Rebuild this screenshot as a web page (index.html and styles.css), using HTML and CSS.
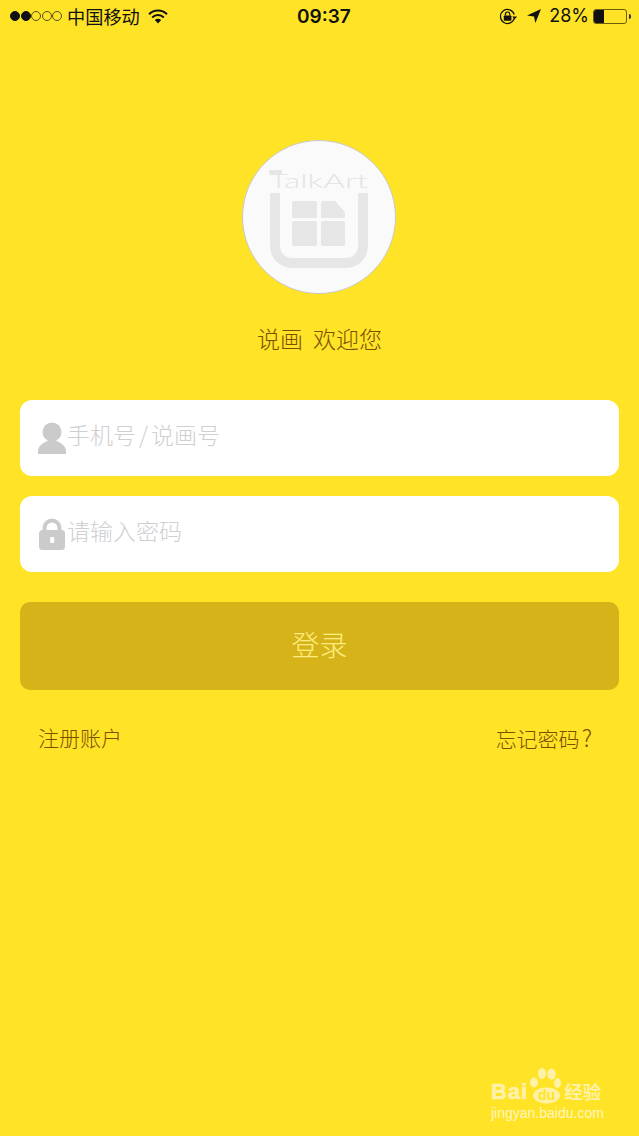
FILE: index.html
```html
<!DOCTYPE html>
<html lang="zh-CN">
<head>
    <meta charset="UTF-8">
    <meta name="viewport" content="width=device-width, initial-scale=1.0">
    <title>说画 登录</title>
    <link rel="stylesheet" href="styles.css">
</head>
<body>
    <div class="page">
        <div class="status-bar">
            <div class="status-left">
                <div class="signal">
                    <span class="dot on"></span>
                    <span class="dot on"></span>
                    <span class="dot"></span>
                    <span class="dot"></span>
                    <span class="dot"></span>
                </div>
                <span class="carrier">中国移动</span>
                <svg class="wifi" width="20" height="15" viewBox="0 0 20 15">
                    <path d="M1 5.2 A13 13 0 0 1 19 5.2" fill="none" stroke="#111" stroke-width="2"/>
                    <path d="M4.2 8.4 A8.5 8.5 0 0 1 15.8 8.4" fill="none" stroke="#111" stroke-width="2"/>
                    <path d="M10 14.5 L6.8 11 A5 5 0 0 1 13.2 11 Z" fill="#111"/>
                </svg>
            </div>
            <div class="status-time">09:37</div>
            <div class="status-right">
                <svg class="rotate-lock" width="19" height="17" viewBox="0 0 19 17">
                    <path d="M16.2 10.4 A7 7 0 1 1 16.2 6.6" fill="none" stroke="#111" stroke-width="1.2"/>
                    <path d="M14.2 8.4 L19 8.4 L16.6 11.4 Z" fill="#111"/>
                    <rect x="5.8" y="7.4" width="7.6" height="5.4" rx="0.8" fill="#111"/>
                    <path d="M7.4 7.6 V6.2 A2.2 2.2 0 0 1 11.8 6.2 V7.6" fill="none" stroke="#111" stroke-width="1.2"/>
                </svg>
                <svg class="arrow" width="14" height="14" viewBox="0 0 14 14">
                    <path d="M14 0 L0 6.6 L7 7.4 L8.4 14 Z" fill="#111"/>
                </svg>
                <span class="percent">28%</span>
                <div class="battery"><div class="battery-box"><div class="battery-fill"></div></div><div class="battery-tip"></div></div>
            </div>
        </div>

        <div class="logo">
            <svg width="152" height="152" viewBox="1 1 152 152">
                <rect x="27" y="30" width="13" height="4" rx="1" fill="#e6e6e6"/>
                <text class="logo-name" x="27" y="48" textLength="99" lengthAdjust="spacingAndGlyphs">TalkArt</text>
                <path d="M33 53 V106 A17 17 0 0 0 50 123 H104 A17 17 0 0 0 121 106 V53" fill="none" stroke="#e6e6e6" stroke-width="10"/>
                <path d="M52 61 H73 A2 2 0 0 1 75 63 V78 H52 A2 2 0 0 1 50 76 V63 A2 2 0 0 1 52 61 Z" fill="#e6e6e6"/>
                <path d="M81 61 H93 L103 72 V76 A2 2 0 0 1 101 78 H79 V63 A2 2 0 0 1 81 61 Z" fill="#e6e6e6"/>
                <rect x="50" y="81" width="25" height="25" rx="2" fill="#e6e6e6"/>
                <rect x="79" y="81" width="24" height="25" rx="2" fill="#e6e6e6"/>
            </svg>
        </div>
        <div class="welcome">说画&nbsp;&nbsp;欢迎您</div>

        <div class="form">
            <div class="field">
                <svg class="field-icon" width="30" height="34" viewBox="0 0 30 34">
                    <circle cx="15" cy="10" r="9.5" fill="#cbcbcb"/>
                    <path d="M1 32 V29 C1 24 6 21 11 18.5 H19 C24 21 29 24 29 29 V32 Z" fill="#cbcbcb"/>
                </svg>
                <span class="placeholder">手机号<span class="slash">/</span>说画号</span>
            </div>
            <div class="field">
                <svg class="field-icon" width="30" height="34" viewBox="0 0 30 34">
                    <path d="M7.5 15 V10 A7.5 7.5 0 0 1 22.5 10 V15" fill="none" stroke="#cbcbcb" stroke-width="4"/>
                    <rect x="2" y="12" width="26" height="20" rx="3.5" fill="#cbcbcb"/>
                    <rect x="13.2" y="19" width="4" height="6" rx="1" fill="#fff"/>
                </svg>
                <span class="placeholder">请输入密码</span>
            </div>
            <div class="login-btn">登录</div>
        </div>

        <div class="links">
            <span>注册账户</span>
            <span>忘记密码<span class="question">?</span></span>
        </div>

        <div class="watermark">
            <div class="wm-top">
                <span class="wm-bai">Bai</span>
                <svg class="wm-paw" width="36" height="37" viewBox="0 0 36 37">
                    <ellipse cx="9" cy="14.5" rx="4" ry="5" fill="#fff2a6"/>
                    <ellipse cx="17" cy="5.5" rx="4" ry="5.5" fill="#fff2a6"/>
                    <ellipse cx="26.5" cy="6" rx="4.3" ry="5.5" fill="#fff2a6"/>
                    <ellipse cx="32.5" cy="15" rx="3.5" ry="5" fill="#fff2a6"/>
                    <ellipse cx="21.5" cy="27.5" rx="13.5" ry="8" fill="#fff2a6"/>
                    <text class="wm-du" x="21.5" y="32" text-anchor="middle">du</text>
                </svg>
                <span class="wm-jy">经验</span>
            </div>
            <div class="wm-url">jingyan.baidu.com</div>
        </div>
    </div>
</body>
</html>
```

FILE: styles.css
```css
* {
    box-sizing: border-box;
}

body {
    margin: 0;
    font-family: "Noto Sans CJK SC", "Noto Sans", sans-serif;
    background-color: #ffe327;
}

.page {
    position: relative;
    height: 1136px;
    overflow: hidden;
    background-color: #ffe327;
}

.status-bar {
    display: flex;
    justify-content: space-between;
    align-items: center;
    height: 32px;
    padding: 0 8px 0 10px;
    position: relative;
    color: #111;
}

.status-left, .status-right, .signal {
    display: flex;
    align-items: center;
}

.signal {
    gap: 0.5px;
}

.dot {
    width: 10px;
    height: 10px;
    border: 1px solid #57500f;
    border-radius: 50%;
}

.dot.on {
    background-color: #111;
    border-color: #111;
}

.carrier {
    margin-left: 5px;
    font-size: 18.2px;
    line-height: 32px;
}

.wifi {
    margin-left: 8px;
}

.status-time {
    position: absolute;
    left: 297px;
    font-family: "Inter", "Noto Sans", sans-serif;
    font-size: 19px;
    font-weight: 600;
    line-height: 33px;
}

.arrow {
    margin-left: 10px;
}

.percent {
    margin-left: 8px;
    font-family: "Inter", "Noto Sans", sans-serif;
    font-size: 18px;
    line-height: 32px;
}

.battery {
    display: flex;
    align-items: center;
    margin-left: 4px;
}

.battery-box {
    width: 34px;
    height: 15px;
    border: 1px solid #6b5d10;
    border-radius: 3px;
    overflow: hidden;
}

.battery-fill {
    width: 10px;
    height: 100%;
    background-color: #111;
}

.battery-tip {
    width: 2px;
    height: 5px;
    margin-left: 2px;
    background-color: #333;
    border-radius: 0 2px 2px 0;
}

.logo {
    width: 154px;
    height: 154px;
    margin: 108px 0 0 242px;
    border: 1px solid #c9c9c9;
    border-radius: 50%;
    background-color: #fafafa;
}

.logo svg {
    display: block;
}

.logo-name {
    font-family: "Lato", "Noto Sans", sans-serif;
    font-size: 20px;
    font-weight: 300;
    fill: #e3e3e3;
}

.welcome {
    margin-top: 28px;
    text-align: center;
    font-size: 23px;
    font-weight: 300;
    line-height: 32px;
    color: #7a5000;
}

.form {
    display: flex;
    flex-direction: column;
    gap: 20px;
    margin: 46px 20px 0;
}

.field {
    display: flex;
    align-items: center;
    height: 76px;
    padding-left: 17px;
    background-color: #fff;
    border-radius: 12px;
}

.placeholder {
    margin-top: -8px;
    font-size: 23px;
    font-weight: 300;
    color: #cfcfd3;
}

.slash {
    padding: 0 3px;
}

.field-icon {
    margin-top: 2px;
}

.login-btn {
    height: 88px;
    margin-top: 10px;
    background-color: #d5b319;
    border-radius: 10px;
    text-align: center;
    font-size: 28px;
    font-weight: 300;
    line-height: 84px;
    color: #ffed80;
}

.links {
    display: flex;
    justify-content: space-between;
    margin-top: 32px;
    padding: 0 47px 0 38px;
    font-size: 21px;
    font-weight: 300;
    line-height: 30px;
    color: #7a5000;
}

.question {
    margin-left: 2px;
    font-size: 23px;
}

.watermark {
    position: absolute;
    left: 491px;
    top: 1068px;
    width: 115px;
}

.wm-top {
    display: flex;
    align-items: flex-end;
    height: 37px;
}

.wm-bai {
    margin-bottom: -1px;
    font-family: "Liberation Sans", sans-serif;
    font-size: 22px;
    font-weight: 700;
    letter-spacing: 1px;
    line-height: 28px;
    color: #fff2a6;
    -webkit-text-stroke: 0.7px #fff2a6;
}

.wm-paw {
    flex-shrink: 0;
    margin-left: -3px;
}

.wm-du {
    font-family: "Liberation Sans", sans-serif;
    font-size: 14px;
    font-weight: 700;
    fill: #ffe327;
}

.wm-jy {
    margin-left: 3px;
    font-size: 18.5px;
    font-weight: 700;
    line-height: 28px;
    white-space: nowrap;
    color: #fff2a6;
}

.wm-url {
    font-family: "Liberation Sans", sans-serif;
    font-size: 14px;
    line-height: 16px;
    white-space: nowrap;
    color: #fff6c0;
}
```
